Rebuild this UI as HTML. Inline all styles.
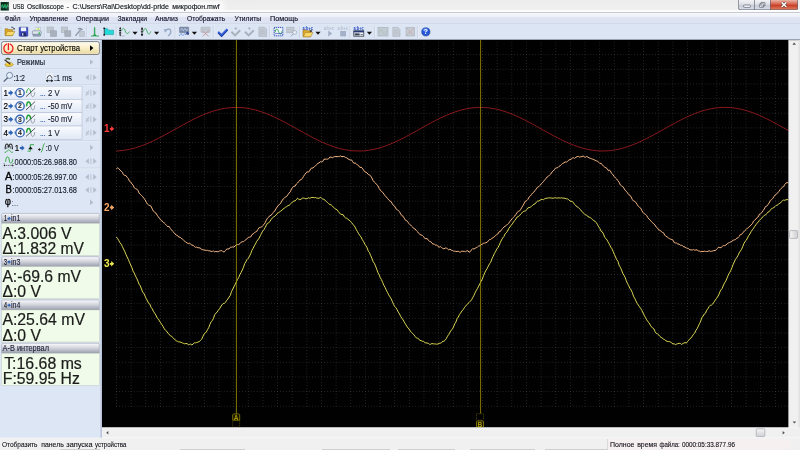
<!DOCTYPE html>
<html lang="ru"><head><meta charset="utf-8"><title>USB Oscilloscope</title>
<style>html,body{margin:0;padding:0;background:#dce6f4;overflow:hidden}svg{display:block;font-family:'Liberation Sans', sans-serif;opacity:0.999;will-change:transform}text{white-space:pre}</style>
</head><body>
<svg width="800" height="450" viewBox="0 0 800 450">
<defs>
<linearGradient id="gMenu" x1="0" y1="0" x2="0" y2="1"><stop offset="0" stop-color="#f7f8fc"/><stop offset="0.32" stop-color="#eef0f9"/><stop offset="0.42" stop-color="#e0e4f3"/><stop offset="1" stop-color="#dde2f2"/></linearGradient>
<linearGradient id="gTitle" x1="0" y1="0" x2="0" y2="1"><stop offset="0" stop-color="#ededed"/><stop offset="0.74" stop-color="#f0f0f0"/><stop offset="0.82" stop-color="#fbfbfb"/><stop offset="1" stop-color="#fdfdfd"/></linearGradient>
<linearGradient id="gBtn" x1="0" y1="0" x2="0" y2="1"><stop offset="0" stop-color="#fffdf0"/><stop offset="0.5" stop-color="#faf0c8"/><stop offset="1" stop-color="#e8d49c"/></linearGradient>
<linearGradient id="gHdr" x1="0" y1="0" x2="0" y2="1"><stop offset="0" stop-color="#fbfbfd"/><stop offset="0.45" stop-color="#d4d6de"/><stop offset="1" stop-color="#9a9eac"/></linearGradient>
<linearGradient id="gRow" x1="0" y1="0" x2="0" y2="1"><stop offset="0" stop-color="#fbfcff"/><stop offset="1" stop-color="#e2eaf7"/></linearGradient>
<linearGradient id="gWB" x1="0" y1="0" x2="0" y2="1"><stop offset="0" stop-color="#f2f3f6"/><stop offset="0.45" stop-color="#dfe1e8"/><stop offset="0.55" stop-color="#c8ccd6"/><stop offset="1" stop-color="#d8dce6"/></linearGradient>
<linearGradient id="gClose" x1="0" y1="0" x2="0" y2="1"><stop offset="0" stop-color="#eab4a6"/><stop offset="0.45" stop-color="#d6604a"/><stop offset="0.55" stop-color="#c63e26"/><stop offset="1" stop-color="#e07c5c"/></linearGradient>
<linearGradient id="gThumb" x1="0" y1="0" x2="0" y2="1"><stop offset="0" stop-color="#f6f6f6"/><stop offset="1" stop-color="#cfcfd4"/></linearGradient>
<linearGradient id="gThumbH" x1="0" y1="0" x2="1" y2="0"><stop offset="0" stop-color="#f6f6f6"/><stop offset="1" stop-color="#cfcfd4"/></linearGradient>
<filter id="glow" x="-10%" y="-80%" width="120%" height="260%"><feGaussianBlur stdDeviation="2"/></filter>
</defs>
<g id="titlebar">
<rect x="0.00" y="0.00" width="800.00" height="12.60" fill="url(#gTitle)" />
<rect x="0.60" y="2.00" width="8.40" height="8.60" fill="#123a2a" />
<rect x="1.20" y="2.60" width="7.20" height="7.40" fill="#0a2a1a" />
<path d="M1.4 7.5L2.6 4.5L3.8 8L5 4.2L6.2 8.2L7.4 4.6L8.3 7" fill="none" stroke="#30e060" stroke-width="0.7" />
<path d="M1.4 5L3 8.4L4.6 5L6 8.6L7.6 5.4" fill="none" stroke="#20a0a0" stroke-width="0.5" />
<rect x="10.00" y="1.50" width="214.00" height="9.50" fill="#ffffff" filter="url(#glow)" opacity="0.9"/>
<text y="9.23" font-size="7.90" fill="#10141c" stroke="#10141c" stroke-width="0.150"><tspan x="12.65" textLength="11.50" lengthAdjust="spacingAndGlyphs">USB</tspan><tspan> </tspan><tspan x="27.00" textLength="37.00" lengthAdjust="spacingAndGlyphs">Oscilloscope</tspan><tspan> </tspan><tspan x="66.40" textLength="2.60" lengthAdjust="spacingAndGlyphs">-</tspan><tspan> </tspan><tspan x="72.60" textLength="96.40" lengthAdjust="spacingAndGlyphs">C:\Users\Rai\Desktop\dd-pride</tspan><tspan> </tspan><tspan x="172.20" textLength="47.60" lengthAdjust="spacingAndGlyphs">микрофон.mwf</tspan></text>
<path d="M738.4 0H798V8.2Q798 10.1 796.2 10.1H740.2Q738.4 10.1 738.4 8.2Z" fill="#5a6070" />
<path d="M739 0H754.3V9.5H740.6Q739 9.5 739 7.9Z" fill="url(#gWB)" />
<rect x="754.90" y="0.00" width="15.10" height="9.50" fill="url(#gWB)" />
<path d="M770.6 0H797.4V7.9Q797.4 9.5 795.8 9.5H770.6Z" fill="url(#gClose)" />
<rect x="743.60" y="5.00" width="6.80" height="2.40" fill="#f4f6fa" stroke="#4a5060" stroke-width="0.6" rx="0.6" />
<rect x="759.40" y="3.80" width="4.20" height="3.60" fill="#f4f6fa" stroke="#4a5060" stroke-width="0.6" rx="0.5" />
<rect x="760.80" y="2.40" width="4.20" height="3.60" fill="none" stroke="#4a5060" stroke-width="0.6" rx="0.5" />
<path d="M781.6 2.4L786.4 7M786.4 2.4L781.6 7" fill="none" stroke="#5a2a24" stroke-width="2.6" />
<path d="M781.6 2.4L786.4 7M786.4 2.4L781.6 7" fill="none" stroke="#fff" stroke-width="1.5" />
<line x1="0.00" y1="12.75" x2="800.00" y2="12.75" stroke="#9ea2ae" stroke-width="0.7" />
</g>
<g id="menubar">
<rect x="0.00" y="13.00" width="800.00" height="11.20" fill="url(#gMenu)" />
<text x="4.50" y="21.46" font-size="8.00" fill="#0c0c20" stroke="#0c0c20" stroke-width="0.128" font-weight="normal" textLength="16.00" lengthAdjust="spacingAndGlyphs" >Файл</text>
<text x="29.50" y="21.46" font-size="8.00" fill="#0c0c20" stroke="#0c0c20" stroke-width="0.128" font-weight="normal" textLength="38.50" lengthAdjust="spacingAndGlyphs" >Управление</text>
<text x="76.00" y="21.46" font-size="8.00" fill="#0c0c20" stroke="#0c0c20" stroke-width="0.128" font-weight="normal" textLength="33.00" lengthAdjust="spacingAndGlyphs" >Операции</text>
<text x="117.50" y="21.46" font-size="8.00" fill="#0c0c20" stroke="#0c0c20" stroke-width="0.128" font-weight="normal" textLength="29.50" lengthAdjust="spacingAndGlyphs" >Закладки</text>
<text x="155.00" y="21.46" font-size="8.00" fill="#0c0c20" stroke="#0c0c20" stroke-width="0.128" font-weight="normal" textLength="23.00" lengthAdjust="spacingAndGlyphs" >Анализ</text>
<text x="187.00" y="21.46" font-size="8.00" fill="#0c0c20" stroke="#0c0c20" stroke-width="0.128" font-weight="normal" textLength="38.00" lengthAdjust="spacingAndGlyphs" >Отображать</text>
<text x="234.50" y="21.46" font-size="8.00" fill="#0c0c20" stroke="#0c0c20" stroke-width="0.128" font-weight="normal" textLength="26.50" lengthAdjust="spacingAndGlyphs" >Утилиты</text>
<text x="270.00" y="21.46" font-size="8.00" fill="#0c0c20" stroke="#0c0c20" stroke-width="0.128" font-weight="normal" textLength="28.00" lengthAdjust="spacingAndGlyphs" >Помощь</text>
</g>
<g id="toolbar">
<rect x="0.00" y="24.20" width="800.00" height="15.00" fill="#dbe5f4" />
<line x1="0.00" y1="23.85" x2="800.00" y2="23.85" stroke="#c2c8de" stroke-width="0.6" />
<line x1="0.00" y1="24.40" x2="800.00" y2="24.40" stroke="#e8eef8" stroke-width="0.5" />
<line x1="0.00" y1="39.50" x2="800.00" y2="39.50" stroke="#8a92a2" stroke-width="0.8" />
</g>
<line x1="1.00" y1="26.50" x2="1.00" y2="37.50" stroke="#b4bed0" stroke-width="0.8" stroke-dasharray="0.8 1"/>
<path d="M5.00 28.80H8.00L8.80 29.60H12.60V35.60H5.00Z" fill="#e0a828" stroke="#8a6a18" stroke-width="0.5" />
<path d="M5.30 35.60L7.40 31.40H15.00L12.60 35.60Z" fill="#fad868" stroke="#9a761c" stroke-width="0.5" />
<path d="M11.20 27.20Q13.40 26.80 14.00 28.60" fill="none" stroke="#202020" stroke-width="0.7" />
<path d="M13.00 28.40L15.00 28.20L14.20 30.00Z" fill="#202020" />
<rect x="19.20" y="27.20" width="8.60" height="9.00" fill="#3a48c4" stroke="#1c2478" stroke-width="0.5" rx="0.6" />
<rect x="20.80" y="27.40" width="5.40" height="3.80" fill="#f2f4ff" />
<rect x="21.40" y="32.60" width="4.40" height="3.60" fill="#20285a" />
<rect x="22.00" y="33.20" width="1.40" height="2.40" fill="#c8d0f0" />
<path d="M34.6 31L36 27.4H40.8L39.8 31Z" fill="#fbfdf4" stroke="#8a96a6" stroke-width="0.4" />
<path d="M36 29.6L38.8 27.8L39.6 29.8Z" fill="#a8e048" />
<rect x="32.40" y="30.80" width="8.80" height="3.80" fill="#dfe5ee" stroke="#5a6a84" stroke-width="0.5" rx="0.8" />
<rect x="33.00" y="34.20" width="7.60" height="2.00" fill="#9aa6ba" stroke="#5a6a84" stroke-width="0.4" rx="0.4" />
<rect x="38.40" y="32.40" width="1.80" height="1.40" fill="#28b838" />
<line x1="44.40" y1="26.00" x2="44.40" y2="38.00" stroke="#aeb8cc" stroke-width="0.6" />
<line x1="45.00" y1="26.00" x2="45.00" y2="38.00" stroke="#f6f8fc" stroke-width="0.6" />
<rect x="47.00" y="27.00" width="6.40" height="5.60" fill="#c3cad4" stroke="#a9b1bd" stroke-width="0.6" />
<path d="M48.00 31L49.60 28.6L51.00 31L52.60 28.6" fill="none" stroke="#b4beb8" stroke-width="0.5" />
<rect x="50.60" y="30.80" width="6.00" height="5.60" fill="#a9b1bd" stroke="#99a2b0" stroke-width="0.6" />
<rect x="61.20" y="27.00" width="6.40" height="5.60" fill="#c3cad4" stroke="#a9b1bd" stroke-width="0.6" />
<path d="M62.20 31L63.80 28.6L65.20 31L66.80 28.6" fill="none" stroke="#b4beb8" stroke-width="0.5" />
<rect x="64.80" y="30.80" width="6.00" height="5.60" fill="#a9b1bd" stroke="#99a2b0" stroke-width="0.6" />
<path d="M75.4 35.8L80.6 29.6" fill="none" stroke="#8a94a4" stroke-width="1.3" />
<path d="M77.6 28.4Q80.6 26.6 83 29.4L81.6 30.6Q80.4 28.8 78.4 29.6Z" fill="#8a94a4" />
<rect x="79.60" y="31.40" width="4.80" height="5.00" fill="#c3cad4" stroke="#a9b1bd" stroke-width="0.5" />
<line x1="87.00" y1="26.00" x2="87.00" y2="38.00" stroke="#aeb8cc" stroke-width="0.6" />
<line x1="87.60" y1="26.00" x2="87.60" y2="38.00" stroke="#f6f8fc" stroke-width="0.6" />
<path d="M91 36H94.4V27.4M94.8 27.4V36H99" fill="none" stroke="#22a046" stroke-width="0.8" />
<path d="M92.6 36L94.6 33.8L96.8 36Z" fill="#22a046" />
<path d="M104.6 28.4H107.2L108.6 30.2H113.6V34.6H104.6Z" fill="#22dada" stroke="#109898" stroke-width="0.5" />
<rect x="103.40" y="27.60" width="1.60" height="1.40" fill="#101010" />
<rect x="103.40" y="34.20" width="1.60" height="1.40" fill="#101010" />
<line x1="104.20" y1="28.60" x2="104.20" y2="35.00" stroke="#101010" stroke-width="0.6" />
<line x1="116.40" y1="26.00" x2="116.40" y2="38.00" stroke="#aeb8cc" stroke-width="0.6" />
<line x1="117.00" y1="26.00" x2="117.00" y2="38.00" stroke="#f6f8fc" stroke-width="0.6" />
<path d="M120.2 27.4V36" fill="none" stroke="#101010" stroke-width="0.7" stroke-dasharray="0.9 0.7"/>
<path d="M119.2 29L120.2 27.2L121.2 29ZM119.2 34.4L120.2 36.2L121.2 34.4Z" fill="#101010" />
<rect x="119.20" y="30.00" width="2.00" height="1.20" fill="#101010" />
<rect x="119.20" y="32.40" width="2.00" height="1.20" fill="#101010" />
<path d="M121.6 30.6C122.6 27.6 124.2 27.6 125.2 30.8S128 34.6 129.4 31.6" fill="none" stroke="#2aa040" stroke-width="0.8" />
<line x1="121.00" y1="36.00" x2="125.00" y2="36.00" stroke="#8a94a4" stroke-width="0.5" />
<path d="M132.40 31.8H137.60L135.00 34.8Z" fill="#101010" />
<path d="M142 27.6V35.8" fill="none" stroke="#101010" stroke-width="0.8" />
<path d="M140.8 29.4L142 27.2L143.2 29.4ZM140.8 34L142 36.2L143.2 34Z" fill="#101010" />
<line x1="140.80" y1="31.70" x2="143.20" y2="31.70" stroke="#101010" stroke-width="0.7" />
<path d="M143.4 31.4C144.4 27.6 146 27.6 147 31.2S149.6 35 150.8 31.4" fill="none" stroke="#2aa040" stroke-width="0.8" />
<path d="M154.00 31.8H159.20L156.60 34.8Z" fill="#101010" />
<path d="M165.4 31.2Q168.4 27.4 170.4 30Q171.8 32.8 168.2 36" fill="none" stroke="#9cabc9" stroke-width="1.5" />
<path d="M163.8 29L167.4 29.4L165 32.8Z" fill="#9cabc9" />
<line x1="175.20" y1="26.00" x2="175.20" y2="38.00" stroke="#aeb8cc" stroke-width="0.6" />
<line x1="175.80" y1="26.00" x2="175.80" y2="38.00" stroke="#f6f8fc" stroke-width="0.6" />
<rect x="179.60" y="27.20" width="9.00" height="5.40" fill="#7a8aa8" stroke="#55627a" stroke-width="0.5" rx="0.4" />
<path d="M180.2 30.6L181.8 28.4L183.4 30.8L185 28.4L186.6 30.8L188 28.6" fill="none" stroke="#d8ecff" stroke-width="0.6" />
<path d="M179.2 35.8L181 33.6L182.8 35.6L184.6 33.6L186 35" fill="none" stroke="#2a6ae0" stroke-width="0.8" stroke-dasharray="1.2 0.6"/>
<path d="M185.6 33.4L187.6 31.6L189.4 33.4Z" fill="#1a3ea8" />
<rect x="186.40" y="33.40" width="2.60" height="1.20" fill="#20285a" />
<path d="M191.80 31.8H197.00L194.40 34.8Z" fill="#101010" />
<rect x="201.00" y="27.20" width="9.00" height="5.20" fill="#c3cad4" stroke="#a9b1bd" stroke-width="0.6" rx="0.4" />
<path d="M202 30.4L203.6 28.6L205.2 30.6L206.8 28.6L208.6 30.6" fill="none" stroke="#b0bcc8" stroke-width="0.5" />
<path d="M202.4 30.8L208.8 36.4M208.8 30.8L202.4 36.4" fill="none" stroke="#c49a9a" stroke-width="0.9" />
<line x1="213.40" y1="26.00" x2="213.40" y2="38.00" stroke="#aeb8cc" stroke-width="0.6" />
<line x1="214.00" y1="26.00" x2="214.00" y2="38.00" stroke="#f6f8fc" stroke-width="0.6" />
<path d="M218.2 32.2L221.6 35.6L227.4 29.4" fill="none" stroke="#16309a" stroke-width="2.2" />
<path d="M218.4 31.8L221.6 34.8L227.2 29" fill="none" stroke="#3a6ae0" stroke-width="1.3" />
<path d="M231.40 31.8L235.00 35.4L240.20 30.2" fill="none" stroke="#a9b1bd" stroke-width="2.0" />
<path d="M235.80 27V30M234.40 28.4H237.20" fill="none" stroke="#a9b1bd" stroke-width="0.8" />
<path d="M245.00 31.8L248.60 35.4L253.80 30.2" fill="none" stroke="#a9b1bd" stroke-width="2.0" />
<path d="M249.40 27V30M248.00 28.4H250.80" fill="none" stroke="#a9b1bd" stroke-width="0.8" />
<path d="M258.8 27.2H264.6L266.6 29.2V36.4H258.8Z" fill="#c3cad4" stroke="#a9b1bd" stroke-width="0.6" />
<path d="M260 30H264M260 31.8H265M260 33.6H265" fill="none" stroke="#a9b1bd" stroke-width="0.5" />
<line x1="270.00" y1="26.00" x2="270.00" y2="38.00" stroke="#aeb8cc" stroke-width="0.6" />
<line x1="270.60" y1="26.00" x2="270.60" y2="38.00" stroke="#f6f8fc" stroke-width="0.6" />
<rect x="274.20" y="27.40" width="8.60" height="8.40" fill="#eef4ff" stroke="#2238b8" stroke-width="0.9" stroke-dasharray="1.2 0.7"/>
<path d="M275 32.4C276 28 277.6 28 278.6 31.6S281.2 35 282.2 30.8" fill="none" stroke="#2aa040" stroke-width="0.9" />
<line x1="275.00" y1="33.60" x2="282.00" y2="33.60" stroke="#2238b8" stroke-width="0.6" />
<rect x="286.80" y="27.20" width="7.20" height="5.60" fill="#c3cad4" stroke="#a9b1bd" stroke-width="0.6" />
<path d="M287.6 31L289.4 29L291 31L292.8 28.8" fill="none" stroke="#b0bcb8" stroke-width="0.5" />
<circle cx="294.8" cy="32.4" r="1.9" fill="#eef2f8" stroke="#9aa4b4" stroke-width="0.7"/>
<line x1="293.40" y1="33.80" x2="291.00" y2="36.40" stroke="#9aa4b4" stroke-width="1.0" />
<line x1="299.60" y1="26.00" x2="299.60" y2="38.00" stroke="#aeb8cc" stroke-width="0.6" />
<line x1="300.20" y1="26.00" x2="300.20" y2="38.00" stroke="#f6f8fc" stroke-width="0.6" />
<text x="302.60" y="29.6" font-size="4.6" font-weight="bold" fill="#2244c0" textLength="10.2" lengthAdjust="spacingAndGlyphs">a:b+c</text>
<path d="M303.00 30.00H306.00L306.80 30.80H310.60V36.80H303.00Z" fill="#e0a828" stroke="#8a6a18" stroke-width="0.5" />
<path d="M303.30 36.80L305.40 32.60H313.00L310.60 36.80Z" fill="#fad868" stroke="#9a761c" stroke-width="0.5" />
<path d="M309.4 29.8L311.6 31.4M311.6 31.4L311.8 29.6M311.6 31.4L309.8 31.6" fill="none" stroke="#202020" stroke-width="0.7" />
<path d="M315.40 31.8H320.60L318.00 34.8Z" fill="#101010" />
<text x="323.80" y="29.6" font-size="4.6" font-weight="bold" fill="#b4bccc" textLength="10.2" lengthAdjust="spacingAndGlyphs">a:b+c</text>
<path d="M328.2 30.6V36.4L332.2 33.5Z" fill="#a3b0c8" />
<text x="337.60" y="29.6" font-size="4.6" font-weight="bold" fill="#b4bccc" textLength="10.2" lengthAdjust="spacingAndGlyphs">a:b+c</text>
<rect x="340.20" y="31.00" width="5.80" height="5.40" fill="#a3b0c8" />
<line x1="350.20" y1="26.00" x2="350.20" y2="38.00" stroke="#aeb8cc" stroke-width="0.6" />
<line x1="350.80" y1="26.00" x2="350.80" y2="38.00" stroke="#f6f8fc" stroke-width="0.6" />
<text x="353.40" y="29.6" font-size="4.6" font-weight="bold" fill="#2244c0" textLength="10.2" lengthAdjust="spacingAndGlyphs">a:b+c</text>
<rect x="353.80" y="30.80" width="10.00" height="5.40" fill="#f4f6fa" stroke="#202838" stroke-width="0.7" />
<rect x="353.80" y="30.80" width="10.00" height="1.60" fill="#283a78" />
<rect x="354.60" y="33.40" width="5.00" height="2.00" fill="#3a4254" />
<line x1="360.40" y1="34.60" x2="363.00" y2="34.60" stroke="#202838" stroke-width="0.6" />
<path d="M366.80 31.8H372.00L369.40 34.8Z" fill="#101010" />
<line x1="374.80" y1="26.00" x2="374.80" y2="38.00" stroke="#aeb8cc" stroke-width="0.6" />
<line x1="375.40" y1="26.00" x2="375.40" y2="38.00" stroke="#f6f8fc" stroke-width="0.6" />
<rect x="378.00" y="27.40" width="10.00" height="8.60" fill="#c2cad2" stroke="#a4aebc" stroke-width="0.6" />
<path d="M379 33C380.2 29 381.6 29 382.8 32S385.4 35 386.8 30.6" fill="none" stroke="#a8b8ac" stroke-width="0.6" />
<path d="M392.8 27.4H398L400 29.4V36.4H392.8Z" fill="#c6ccd4" stroke="#a9b1bd" stroke-width="0.6" />
<path d="M394 30.4H397.4M394 32.2H398.8M394 34H398.8" fill="none" stroke="#b0b8c2" stroke-width="0.5" />
<rect x="406.00" y="27.40" width="8.60" height="8.60" fill="#c6ccd4" stroke="#a9b1bd" stroke-width="0.6" />
<path d="M406.6 28L414 35.6M414 28L406.6 35.6" fill="none" stroke="#c8a4a4" stroke-width="0.7" />
<line x1="417.80" y1="26.00" x2="417.80" y2="38.00" stroke="#aeb8cc" stroke-width="0.6" />
<line x1="418.40" y1="26.00" x2="418.40" y2="38.00" stroke="#f6f8fc" stroke-width="0.6" />
<circle cx="426.2" cy="32.2" r="4.3" fill="#c8ccd4"/>
<circle cx="425.8" cy="31.8" r="4.1" fill="#2456d8" stroke="#16389c" stroke-width="0.5"/>
<ellipse cx="425.4" cy="30" rx="2.8" ry="1.8" fill="#6a9af4" opacity="0.7"/>
<text x="425.8" y="34.3" font-size="6.6" font-weight="bold" fill="#fff" text-anchor="middle">?</text>
<g id="plot">
<rect x="101.90" y="40.00" width="686.70" height="387.60" fill="#000" />
<line x1="116.50" y1="42.64" x2="116.50" y2="406.51" stroke="#6a6a6a" stroke-width="0.5856515373352855" stroke-dasharray="0.5857 2.3440"/>
<line x1="131.14" y1="42.64" x2="131.14" y2="406.51" stroke="#6a6a6a" stroke-width="0.5856515373352855" stroke-dasharray="0.5857 2.3440"/>
<line x1="145.78" y1="42.64" x2="145.78" y2="406.51" stroke="#6a6a6a" stroke-width="0.5856515373352855" stroke-dasharray="0.5857 2.3440"/>
<line x1="160.42" y1="42.64" x2="160.42" y2="406.51" stroke="#6a6a6a" stroke-width="0.5856515373352855" stroke-dasharray="0.5857 2.3440"/>
<line x1="175.07" y1="42.64" x2="175.07" y2="406.51" stroke="#6a6a6a" stroke-width="0.5856515373352855" stroke-dasharray="0.5857 2.3440"/>
<line x1="189.71" y1="42.64" x2="189.71" y2="406.51" stroke="#6a6a6a" stroke-width="0.5856515373352855" stroke-dasharray="0.5857 2.3440"/>
<line x1="204.35" y1="42.64" x2="204.35" y2="406.51" stroke="#6a6a6a" stroke-width="0.5856515373352855" stroke-dasharray="0.5857 2.3440"/>
<line x1="218.99" y1="42.64" x2="218.99" y2="406.51" stroke="#6a6a6a" stroke-width="0.5856515373352855" stroke-dasharray="0.5857 2.3440"/>
<line x1="233.63" y1="42.64" x2="233.63" y2="406.51" stroke="#6a6a6a" stroke-width="0.5856515373352855" stroke-dasharray="0.5857 2.3440"/>
<line x1="248.27" y1="42.64" x2="248.27" y2="406.51" stroke="#6a6a6a" stroke-width="0.5856515373352855" stroke-dasharray="0.5857 2.3440"/>
<line x1="262.91" y1="42.64" x2="262.91" y2="406.51" stroke="#6a6a6a" stroke-width="0.5856515373352855" stroke-dasharray="0.5857 2.3440"/>
<line x1="277.55" y1="42.64" x2="277.55" y2="406.51" stroke="#6a6a6a" stroke-width="0.5856515373352855" stroke-dasharray="0.5857 2.3440"/>
<line x1="292.20" y1="42.64" x2="292.20" y2="406.51" stroke="#6a6a6a" stroke-width="0.5856515373352855" stroke-dasharray="0.5857 2.3440"/>
<line x1="306.84" y1="42.64" x2="306.84" y2="406.51" stroke="#6a6a6a" stroke-width="0.5856515373352855" stroke-dasharray="0.5857 2.3440"/>
<line x1="321.48" y1="42.64" x2="321.48" y2="406.51" stroke="#6a6a6a" stroke-width="0.5856515373352855" stroke-dasharray="0.5857 2.3440"/>
<line x1="336.12" y1="42.64" x2="336.12" y2="406.51" stroke="#6a6a6a" stroke-width="0.5856515373352855" stroke-dasharray="0.5857 2.3440"/>
<line x1="350.76" y1="42.64" x2="350.76" y2="406.51" stroke="#6a6a6a" stroke-width="0.5856515373352855" stroke-dasharray="0.5857 2.3440"/>
<line x1="365.40" y1="42.64" x2="365.40" y2="406.51" stroke="#6a6a6a" stroke-width="0.5856515373352855" stroke-dasharray="0.5857 2.3440"/>
<line x1="380.04" y1="42.64" x2="380.04" y2="406.51" stroke="#6a6a6a" stroke-width="0.5856515373352855" stroke-dasharray="0.5857 2.3440"/>
<line x1="394.68" y1="42.64" x2="394.68" y2="406.51" stroke="#6a6a6a" stroke-width="0.5856515373352855" stroke-dasharray="0.5857 2.3440"/>
<line x1="409.33" y1="42.64" x2="409.33" y2="406.51" stroke="#6a6a6a" stroke-width="0.5856515373352855" stroke-dasharray="0.5857 2.3440"/>
<line x1="423.97" y1="42.64" x2="423.97" y2="406.51" stroke="#6a6a6a" stroke-width="0.5856515373352855" stroke-dasharray="0.5857 2.3440"/>
<line x1="438.61" y1="42.64" x2="438.61" y2="406.51" stroke="#6a6a6a" stroke-width="0.5856515373352855" stroke-dasharray="0.5857 2.3440"/>
<line x1="453.25" y1="42.64" x2="453.25" y2="406.51" stroke="#6a6a6a" stroke-width="0.5856515373352855" stroke-dasharray="0.5857 2.3440"/>
<line x1="467.89" y1="42.64" x2="467.89" y2="406.51" stroke="#6a6a6a" stroke-width="0.5856515373352855" stroke-dasharray="0.5857 2.3440"/>
<line x1="482.53" y1="42.64" x2="482.53" y2="406.51" stroke="#6a6a6a" stroke-width="0.5856515373352855" stroke-dasharray="0.5857 2.3440"/>
<line x1="497.17" y1="42.64" x2="497.17" y2="406.51" stroke="#6a6a6a" stroke-width="0.5856515373352855" stroke-dasharray="0.5857 2.3440"/>
<line x1="511.81" y1="42.64" x2="511.81" y2="406.51" stroke="#6a6a6a" stroke-width="0.5856515373352855" stroke-dasharray="0.5857 2.3440"/>
<line x1="526.46" y1="42.64" x2="526.46" y2="406.51" stroke="#6a6a6a" stroke-width="0.5856515373352855" stroke-dasharray="0.5857 2.3440"/>
<line x1="541.10" y1="42.64" x2="541.10" y2="406.51" stroke="#6a6a6a" stroke-width="0.5856515373352855" stroke-dasharray="0.5857 2.3440"/>
<line x1="555.74" y1="42.64" x2="555.74" y2="406.51" stroke="#6a6a6a" stroke-width="0.5856515373352855" stroke-dasharray="0.5857 2.3440"/>
<line x1="570.38" y1="42.64" x2="570.38" y2="406.51" stroke="#6a6a6a" stroke-width="0.5856515373352855" stroke-dasharray="0.5857 2.3440"/>
<line x1="585.02" y1="42.64" x2="585.02" y2="406.51" stroke="#6a6a6a" stroke-width="0.5856515373352855" stroke-dasharray="0.5857 2.3440"/>
<line x1="599.66" y1="42.64" x2="599.66" y2="406.51" stroke="#6a6a6a" stroke-width="0.5856515373352855" stroke-dasharray="0.5857 2.3440"/>
<line x1="614.30" y1="42.64" x2="614.30" y2="406.51" stroke="#6a6a6a" stroke-width="0.5856515373352855" stroke-dasharray="0.5857 2.3440"/>
<line x1="628.95" y1="42.64" x2="628.95" y2="406.51" stroke="#6a6a6a" stroke-width="0.5856515373352855" stroke-dasharray="0.5857 2.3440"/>
<line x1="643.59" y1="42.64" x2="643.59" y2="406.51" stroke="#6a6a6a" stroke-width="0.5856515373352855" stroke-dasharray="0.5857 2.3440"/>
<line x1="658.23" y1="42.64" x2="658.23" y2="406.51" stroke="#6a6a6a" stroke-width="0.5856515373352855" stroke-dasharray="0.5857 2.3440"/>
<line x1="672.87" y1="42.64" x2="672.87" y2="406.51" stroke="#6a6a6a" stroke-width="0.5856515373352855" stroke-dasharray="0.5857 2.3440"/>
<line x1="687.51" y1="42.64" x2="687.51" y2="406.51" stroke="#6a6a6a" stroke-width="0.5856515373352855" stroke-dasharray="0.5857 2.3440"/>
<line x1="702.15" y1="42.64" x2="702.15" y2="406.51" stroke="#6a6a6a" stroke-width="0.5856515373352855" stroke-dasharray="0.5857 2.3440"/>
<line x1="716.79" y1="42.64" x2="716.79" y2="406.51" stroke="#6a6a6a" stroke-width="0.5856515373352855" stroke-dasharray="0.5857 2.3440"/>
<line x1="731.43" y1="42.64" x2="731.43" y2="406.51" stroke="#6a6a6a" stroke-width="0.5856515373352855" stroke-dasharray="0.5857 2.3440"/>
<line x1="746.08" y1="42.64" x2="746.08" y2="406.51" stroke="#6a6a6a" stroke-width="0.5856515373352855" stroke-dasharray="0.5857 2.3440"/>
<line x1="760.72" y1="42.64" x2="760.72" y2="406.51" stroke="#6a6a6a" stroke-width="0.5856515373352855" stroke-dasharray="0.5857 2.3440"/>
<line x1="775.36" y1="42.64" x2="775.36" y2="406.51" stroke="#6a6a6a" stroke-width="0.5856515373352855" stroke-dasharray="0.5857 2.3440"/>
<line x1="116.21" y1="54.65" x2="788.60" y2="54.65" stroke="#6a6a6a" stroke-width="0.5856515373352855" stroke-dasharray="0.5857 2.3426"/>
<line x1="116.21" y1="69.30" x2="788.60" y2="69.30" stroke="#6a6a6a" stroke-width="0.5856515373352855" stroke-dasharray="0.5857 2.3426"/>
<line x1="116.21" y1="83.95" x2="788.60" y2="83.95" stroke="#6a6a6a" stroke-width="0.5856515373352855" stroke-dasharray="0.5857 2.3426"/>
<line x1="116.21" y1="98.60" x2="788.60" y2="98.60" stroke="#6a6a6a" stroke-width="0.5856515373352855" stroke-dasharray="0.5857 2.3426"/>
<line x1="116.21" y1="113.24" x2="788.60" y2="113.24" stroke="#6a6a6a" stroke-width="0.5856515373352855" stroke-dasharray="0.5857 2.3426"/>
<line x1="116.21" y1="127.89" x2="788.60" y2="127.89" stroke="#6a6a6a" stroke-width="0.5856515373352855" stroke-dasharray="0.5857 2.3426"/>
<line x1="116.21" y1="142.54" x2="788.60" y2="142.54" stroke="#6a6a6a" stroke-width="0.5856515373352855" stroke-dasharray="0.5857 2.3426"/>
<line x1="116.21" y1="157.19" x2="788.60" y2="157.19" stroke="#6a6a6a" stroke-width="0.5856515373352855" stroke-dasharray="0.5857 2.3426"/>
<line x1="116.21" y1="171.84" x2="788.60" y2="171.84" stroke="#6a6a6a" stroke-width="0.5856515373352855" stroke-dasharray="0.5857 2.3426"/>
<line x1="116.21" y1="186.49" x2="788.60" y2="186.49" stroke="#6a6a6a" stroke-width="0.5856515373352855" stroke-dasharray="0.5857 2.3426"/>
<line x1="116.21" y1="201.13" x2="788.60" y2="201.13" stroke="#6a6a6a" stroke-width="0.5856515373352855" stroke-dasharray="0.5857 2.3426"/>
<line x1="116.21" y1="215.78" x2="788.60" y2="215.78" stroke="#6a6a6a" stroke-width="0.5856515373352855" stroke-dasharray="0.5857 2.3426"/>
<line x1="116.21" y1="230.43" x2="788.60" y2="230.43" stroke="#6a6a6a" stroke-width="0.5856515373352855" stroke-dasharray="0.5857 2.3426"/>
<line x1="116.21" y1="245.08" x2="788.60" y2="245.08" stroke="#6a6a6a" stroke-width="0.5856515373352855" stroke-dasharray="0.5857 2.3426"/>
<line x1="116.21" y1="259.73" x2="788.60" y2="259.73" stroke="#6a6a6a" stroke-width="0.5856515373352855" stroke-dasharray="0.5857 2.3426"/>
<line x1="116.21" y1="274.38" x2="788.60" y2="274.38" stroke="#6a6a6a" stroke-width="0.5856515373352855" stroke-dasharray="0.5857 2.3426"/>
<line x1="116.21" y1="289.02" x2="788.60" y2="289.02" stroke="#6a6a6a" stroke-width="0.5856515373352855" stroke-dasharray="0.5857 2.3426"/>
<line x1="116.21" y1="303.67" x2="788.60" y2="303.67" stroke="#6a6a6a" stroke-width="0.5856515373352855" stroke-dasharray="0.5857 2.3426"/>
<line x1="116.21" y1="318.32" x2="788.60" y2="318.32" stroke="#6a6a6a" stroke-width="0.5856515373352855" stroke-dasharray="0.5857 2.3426"/>
<line x1="116.21" y1="332.97" x2="788.60" y2="332.97" stroke="#6a6a6a" stroke-width="0.5856515373352855" stroke-dasharray="0.5857 2.3426"/>
<line x1="116.21" y1="347.62" x2="788.60" y2="347.62" stroke="#6a6a6a" stroke-width="0.5856515373352855" stroke-dasharray="0.5857 2.3426"/>
<line x1="116.21" y1="362.27" x2="788.60" y2="362.27" stroke="#6a6a6a" stroke-width="0.5856515373352855" stroke-dasharray="0.5857 2.3426"/>
<line x1="116.21" y1="376.92" x2="788.60" y2="376.92" stroke="#6a6a6a" stroke-width="0.5856515373352855" stroke-dasharray="0.5857 2.3426"/>
<line x1="116.21" y1="391.56" x2="788.60" y2="391.56" stroke="#6a6a6a" stroke-width="0.5856515373352855" stroke-dasharray="0.5857 2.3426"/>
<line x1="116.21" y1="406.21" x2="788.60" y2="406.21" stroke="#6a6a6a" stroke-width="0.5856515373352855" stroke-dasharray="0.5857 2.3426"/>
<path d="M116.3 150.97L118.7 150.85L121.1 150.65L123.5 150.37L125.9 150.01L128.3 149.57L130.7 149.05L133.1 148.46L135.5 147.80L137.9 147.06L140.3 146.25L142.7 145.38L145.1 144.45L147.5 143.46L149.9 142.42L152.3 141.32L154.7 140.18L157.1 139.00L159.5 137.78L161.9 136.53L164.3 135.25L166.7 133.94L169.1 132.62L171.5 131.29L173.9 129.94L176.3 128.60L178.7 127.25L181.1 125.92L183.5 124.60L185.9 123.29L188.3 122.01L190.7 120.75L193.1 119.53L195.5 118.34L197.9 117.20L200.3 116.10L202.7 115.05L205.1 114.05L207.5 113.11L209.9 112.24L212.3 111.42L214.7 110.68L217.1 110.00L219.5 109.40L221.9 108.88L224.3 108.43L226.7 108.06L229.1 107.77L231.5 107.57L233.9 107.44L236.3 107.40L238.7 107.44L241.1 107.57L243.5 107.77L245.9 108.06L248.3 108.43L250.7 108.88L253.1 109.40L255.5 110.00L257.9 110.68L260.3 111.42L262.7 112.24L265.1 113.11L267.5 114.05L269.9 115.05L272.3 116.10L274.7 117.20L277.1 118.34L279.5 119.53L281.9 120.75L284.3 122.01L286.7 123.29L289.1 124.60L291.5 125.92L293.9 127.25L296.3 128.60L298.7 129.94L301.1 131.29L303.5 132.62L305.9 133.94L308.3 135.25L310.7 136.53L313.1 137.78L315.5 139.00L317.9 140.18L320.3 141.32L322.7 142.42L325.1 143.46L327.5 144.45L329.9 145.38L332.3 146.25L334.7 147.06L337.1 147.80L339.5 148.46L341.9 149.05L344.3 149.57L346.7 150.01L349.1 150.37L351.5 150.65L353.9 150.85L356.3 150.97L358.7 151.00L361.1 150.95L363.5 150.82L365.9 150.60L368.3 150.30L370.7 149.93L373.1 149.47L375.5 148.94L377.9 148.33L380.3 147.65L382.7 146.90L385.1 146.08L387.5 145.19L389.9 144.25L392.3 143.25L394.7 142.19L397.1 141.09L399.5 139.94L401.9 138.75L404.3 137.52L406.7 136.26L409.1 134.98L411.5 133.67L413.9 132.34L416.3 131.01L418.7 129.66L421.1 128.32L423.5 126.98L425.9 125.64L428.3 124.32L430.7 123.02L433.1 121.74L435.5 120.49L437.9 119.28L440.3 118.10L442.7 116.96L445.1 115.87L447.5 114.83L449.9 113.85L452.3 112.92L454.7 112.06L457.1 111.26L459.5 110.53L461.9 109.87L464.3 109.29L466.7 108.78L469.1 108.35L471.5 107.99L473.9 107.72L476.3 107.53L478.7 107.43L481.1 107.40L483.5 107.46L485.9 107.60L488.3 107.83L490.7 108.13L493.1 108.52L495.5 108.98L497.9 109.52L500.3 110.14L502.7 110.83L505.1 111.59L507.5 112.41L509.9 113.30L512.3 114.25L514.7 115.26L517.1 116.32L519.5 117.43L521.9 118.58L524.3 119.78L526.7 121.01L529.1 122.27L531.5 123.56L533.9 124.87L536.3 126.20L538.7 127.53L541.1 128.88L543.5 130.22L545.9 131.56L548.3 132.90L550.7 134.21L553.1 135.51L555.5 136.79L557.9 138.04L560.3 139.25L562.7 140.42L565.1 141.55L567.5 142.64L569.9 143.67L572.3 144.65L574.7 145.57L577.1 146.43L579.5 147.22L581.9 147.94L584.3 148.59L586.7 149.17L589.1 149.67L591.5 150.09L593.9 150.44L596.3 150.70L598.7 150.88L601.1 150.98L603.5 151.00L605.9 150.93L608.3 150.78L610.7 150.55L613.1 150.23L615.5 149.84L617.9 149.37L620.3 148.82L622.7 148.19L625.1 147.50L627.5 146.73L629.9 145.90L632.3 145.00L634.7 144.04L637.1 143.03L639.5 141.97L641.9 140.85L644.3 139.69L646.7 138.49L649.1 137.26L651.5 136.00L653.9 134.70L656.3 133.39L658.7 132.07L661.1 130.73L663.5 129.38L665.9 128.04L668.3 126.70L670.7 125.37L673.1 124.05L675.5 122.75L677.9 121.48L680.3 120.24L682.7 119.03L685.1 117.86L687.5 116.73L689.9 115.65L692.3 114.62L694.7 113.65L697.1 112.74L699.5 111.89L701.9 111.10L704.3 110.39L706.7 109.74L709.1 109.18L711.5 108.68L713.9 108.27L716.3 107.93L718.7 107.68L721.1 107.50L723.5 107.41L725.9 107.41L728.3 107.48L730.7 107.64L733.1 107.88L735.5 108.21L737.9 108.61L740.3 109.09L742.7 109.64L745.1 110.28L747.5 110.98L749.9 111.75L752.3 112.59L754.7 113.50L757.1 114.46L759.5 115.48L761.9 116.55L764.3 117.67L766.7 118.83L769.1 120.03L771.5 121.27L773.9 122.54L776.3 123.83L778.7 125.14L781.1 126.47L783.5 127.81L785.9 129.16L788.3 130.50" fill="none" stroke="#b82226" stroke-width="0.75" stroke-linejoin="round" opacity="1"/>
<path d="M116.3 168.86L117.5 167.93L118.7 168.49L119.9 170.02L121.1 171.09L122.3 172.26L123.5 174.72L124.7 175.34L125.9 175.54L127.1 177.24L128.3 178.54L129.5 181.31L130.7 181.96L131.9 183.90L133.1 185.18L134.3 187.84L135.5 188.68L136.7 189.02L137.9 190.37L139.1 193.15L140.3 194.28L141.5 195.61L142.7 196.61L143.9 198.50L145.1 199.62L146.3 202.29L147.5 204.17L148.7 205.14L149.9 205.49L151.1 206.26L152.3 209.15L153.5 211.32L154.7 212.27L155.9 213.10L157.1 215.16L158.3 216.75L159.5 218.40L160.7 219.96L161.9 220.92L163.1 221.84L164.3 223.11L165.5 224.25L166.7 225.59L167.9 226.73L169.1 226.42L170.3 228.43L171.5 229.92L172.7 231.36L173.9 232.50L175.1 233.96L176.3 235.19L177.5 235.36L178.7 237.07L179.9 237.04L181.1 238.33L182.3 239.03L183.5 240.08L184.7 241.08L185.9 242.33L187.1 242.87L188.3 243.60L189.5 243.29L190.7 244.10L191.9 245.17L193.1 245.24L194.3 246.43L195.5 247.34L196.7 247.10L197.9 247.75L199.1 247.86L200.3 247.94L201.5 249.49L202.7 249.72L203.9 249.91L205.1 250.23L206.3 250.35L207.5 250.37L208.7 250.81L209.9 250.83L211.1 251.40L212.3 251.41L213.5 251.00L214.7 251.89L215.9 251.46L217.1 251.71L218.3 251.68L219.5 251.01L220.7 250.81L221.9 250.57L223.1 251.77L224.3 251.93L225.5 250.60L226.7 249.08L227.9 248.90L229.1 248.91L230.3 247.39L231.5 247.17L232.7 246.96L233.9 247.10L235.1 245.93L236.3 244.89L237.5 244.60L238.7 244.48L239.9 243.68L241.1 242.19L242.3 241.76L243.5 241.78L244.7 240.58L245.9 239.68L247.1 238.58L248.3 237.50L249.5 237.16L250.7 236.93L251.9 234.66L253.1 233.92L254.3 233.14L255.5 231.82L256.7 231.50L257.9 229.36L259.1 227.72L260.3 227.35L261.5 227.12L262.7 225.69L263.9 224.62L265.1 222.83L266.3 220.24L267.5 218.12L268.7 217.22L269.9 215.57L271.1 215.35L272.3 213.65L273.5 212.20L274.7 210.99L275.9 208.92L277.1 207.04L278.3 205.32L279.5 204.51L280.7 203.05L281.9 200.96L283.1 199.05L284.3 198.22L285.5 196.82L286.7 196.46L287.9 194.65L289.1 193.04L290.3 191.75L291.5 188.91L292.7 187.27L293.9 186.34L295.1 186.13L296.3 184.08L297.5 183.03L298.7 181.50L299.9 180.12L301.1 179.56L302.3 178.55L303.5 176.44L304.7 174.59L305.9 172.97L307.1 171.91L308.3 171.98L309.5 171.22L310.7 168.71L311.9 167.98L313.1 168.05L314.3 166.64L315.5 165.90L316.7 164.63L317.9 163.21L319.1 163.01L320.3 161.67L321.5 161.94L322.7 161.62L323.9 159.31L325.1 159.11L326.3 159.12L327.5 159.20L328.7 158.68L329.9 157.00L331.1 157.10L332.3 157.73L333.5 157.03L334.7 156.63L335.9 156.44L337.1 156.60L338.3 156.62L339.5 156.37L340.7 155.95L341.9 156.80L343.1 156.43L344.3 156.66L345.5 157.44L346.7 157.83L347.9 158.80L349.1 159.51L350.3 160.06L351.5 159.85L352.7 161.71L353.9 163.33L355.1 162.89L356.3 163.78L357.5 165.06L358.7 165.67L359.9 167.46L361.1 167.28L362.3 168.10L363.5 170.07L364.7 171.69L365.9 172.23L367.1 173.01L368.3 174.56L369.5 174.84L370.7 176.14L371.9 177.98L373.1 180.59L374.3 182.01L375.5 183.05L376.7 184.65L377.9 185.65L379.1 188.33L380.3 190.11L381.5 191.47L382.7 192.32L383.9 194.05L385.1 195.70L386.3 197.00L387.5 198.37L388.7 199.87L389.9 201.04L391.1 201.62L392.3 203.80L393.5 205.58L394.7 206.22L395.9 208.71L397.1 209.70L398.3 210.57L399.5 211.71L400.7 213.94L401.9 215.64L403.1 216.33L404.3 218.22L405.5 220.31L406.7 220.58L407.9 222.42L409.1 223.51L410.3 224.83L411.5 226.05L412.7 227.13L413.9 228.65L415.1 229.03L416.3 230.46L417.5 231.65L418.7 233.32L419.9 234.35L421.1 235.01L422.3 235.40L423.5 236.60L424.7 238.33L425.9 238.80L427.1 238.44L428.3 240.29L429.5 241.35L430.7 241.52L431.9 243.19L433.1 244.03L434.3 244.23L435.5 245.07L436.7 244.93L437.9 246.45L439.1 247.24L440.3 246.51L441.5 247.51L442.7 248.36L443.9 248.88L445.1 248.02L446.3 248.09L447.5 248.77L448.7 249.85L449.9 249.11L451.1 250.05L452.3 250.44L453.5 251.08L454.7 251.21L455.9 251.30L457.1 251.67L458.3 250.95L459.5 252.24L460.7 251.91L461.9 251.04L463.1 251.36L464.3 251.29L465.5 251.62L466.7 250.94L467.9 250.70L469.1 252.27L470.3 251.58L471.5 249.80L472.7 248.61L473.9 249.10L475.1 248.29L476.3 247.68L477.5 247.02L478.7 245.91L479.9 246.01L481.1 244.67L482.3 244.08L483.5 243.28L484.7 243.11L485.9 242.67L487.1 242.32L488.3 240.92L489.5 239.52L490.7 239.41L491.9 238.42L493.1 237.55L494.3 236.90L495.5 235.36L496.7 234.71L497.9 233.94L499.1 231.72L500.3 231.60L501.5 229.78L502.7 228.34L503.9 227.05L505.1 226.33L506.3 225.23L507.5 224.51L508.7 223.41L509.9 221.45L511.1 220.00L512.3 218.44L513.5 217.25L514.7 216.09L515.9 214.41L517.1 212.39L518.3 211.42L519.5 211.03L520.7 209.39L521.9 207.25L523.1 205.37L524.3 203.14L525.5 201.01L526.7 200.61L527.9 199.40L529.1 197.07L530.3 196.11L531.5 194.47L532.7 192.96L533.9 192.11L535.1 190.34L536.3 188.97L537.5 187.11L538.7 186.75L539.9 185.47L541.1 184.03L542.3 182.93L543.5 181.52L544.7 179.76L545.9 178.79L547.1 177.05L548.3 176.12L549.5 175.28L550.7 174.11L551.9 172.12L553.1 171.12L554.3 169.84L555.5 168.13L556.7 167.88L557.9 167.54L559.1 166.25L560.3 165.75L561.5 164.56L562.7 163.29L563.9 162.93L565.1 161.94L566.3 162.09L567.5 161.53L568.7 160.07L569.9 159.53L571.1 159.24L572.3 158.12L573.5 157.75L574.7 158.37L575.9 157.22L577.1 156.76L578.3 156.28L579.5 157.10L580.7 156.82L581.9 156.52L583.1 156.01L584.3 156.83L585.5 157.17L586.7 156.51L587.9 157.04L589.1 157.92L590.3 158.30L591.5 158.81L592.7 159.17L593.9 159.80L595.1 160.17L596.3 160.80L597.5 161.04L598.7 162.37L599.9 163.57L601.1 163.21L602.3 164.82L603.5 166.19L604.7 167.20L605.9 167.82L607.1 168.54L608.3 170.60L609.5 170.00L610.7 171.83L611.9 173.65L613.1 174.85L614.3 176.62L615.5 177.99L616.7 179.05L617.9 180.71L619.1 182.23L620.3 184.91L621.5 185.83L622.7 186.53L623.9 188.17L625.1 190.33L626.3 191.25L627.5 192.86L628.7 194.58L629.9 195.22L631.1 196.93L632.3 199.47L633.5 200.98L634.7 201.41L635.9 202.35L637.1 204.41L638.3 206.27L639.5 207.36L640.7 208.11L641.9 210.77L643.1 212.56L644.3 213.84L645.5 214.29L646.7 215.56L647.9 217.75L649.1 219.15L650.3 220.19L651.5 221.75L652.7 222.79L653.9 224.23L655.1 225.10L656.3 227.17L657.5 228.10L658.7 229.87L659.9 230.27L661.1 231.32L662.3 232.42L663.5 232.71L664.7 235.07L665.9 236.40L667.1 236.77L668.3 237.87L669.5 238.70L670.7 239.22L671.9 239.48L673.1 240.26L674.3 242.71L675.5 242.96L676.7 243.06L677.9 244.23L679.1 243.94L680.3 245.22L681.5 245.32L682.7 245.82L683.9 246.97L685.1 246.88L686.3 248.10L687.5 248.36L688.7 248.78L689.9 249.86L691.1 249.96L692.3 249.98L693.5 249.60L694.7 250.20L695.9 250.01L697.1 249.77L698.3 251.06L699.5 251.06L700.7 251.84L701.9 251.28L703.1 251.59L704.3 251.20L705.5 251.44L706.7 251.55L707.9 251.43L709.1 250.69L710.3 251.36L711.5 251.28L712.7 251.03L713.9 250.57L715.1 250.54L716.3 249.71L717.5 248.40L718.7 247.09L719.9 247.79L721.1 247.53L722.3 246.45L723.5 245.55L724.7 245.69L725.9 245.04L727.1 243.90L728.3 243.06L729.5 242.53L730.7 241.85L731.9 241.32L733.1 240.29L734.3 239.87L735.5 239.68L736.7 238.17L737.9 237.83L739.1 236.55L740.3 234.61L741.5 234.50L742.7 232.72L743.9 231.87L745.1 230.36L746.3 229.33L747.5 228.10L748.7 227.26L749.9 226.24L751.1 224.91L752.3 223.66L753.5 221.19L754.7 220.18L755.9 219.15L757.1 217.54L758.3 216.79L759.5 214.04L760.7 213.72L761.9 212.55L763.1 210.63L764.3 208.97L765.5 206.52L766.7 206.18L767.9 204.70L769.1 202.98L770.3 200.55L771.5 199.60L772.7 198.54L773.9 196.67L775.1 195.00L776.3 194.38L777.5 192.93L778.7 191.70L779.9 189.88L781.1 188.52L782.3 187.33L783.5 186.74L784.7 184.54L785.9 183.15L787.1 182.56L788.3 182.95" fill="none" stroke="#f6b884" stroke-width="1.0" stroke-linejoin="round" opacity="1"/>
<path d="M116.3 237.01L117.5 238.43L118.7 240.36L119.9 242.62L121.1 244.08L122.3 246.37L123.5 249.01L124.7 251.38L125.9 254.25L127.1 256.97L128.3 259.36L129.5 262.37L130.7 265.01L131.9 267.72L133.1 271.17L134.3 273.13L135.5 276.19L136.7 278.21L137.9 281.05L139.1 284.20L140.3 285.91L141.5 288.95L142.7 292.35L143.9 293.31L145.1 296.16L146.3 298.78L147.5 300.97L148.7 303.41L149.9 304.18L151.1 307.41L152.3 308.98L153.5 311.40L154.7 313.24L155.9 315.11L157.1 317.82L158.3 318.89L159.5 321.08L160.7 322.80L161.9 324.72L163.1 326.47L164.3 328.72L165.5 330.32L166.7 331.22L167.9 333.01L169.1 334.55L170.3 335.61L171.5 336.15L172.7 337.58L173.9 338.74L175.1 339.75L176.3 340.80L177.5 341.25L178.7 341.89L179.9 341.96L181.1 342.25L182.3 342.94L183.5 343.40L184.7 343.81L185.9 343.56L187.1 343.57L188.3 344.72L189.5 344.41L190.7 344.07L191.9 345.01L193.1 343.98L194.3 342.83L195.5 342.90L196.7 342.49L197.9 342.12L199.1 341.67L200.3 340.59L201.5 339.53L202.7 336.93L203.9 334.29L205.1 333.34L206.3 331.92L207.5 329.67L208.7 327.66L209.9 324.45L211.1 321.76L212.3 320.61L213.5 318.24L214.7 314.70L215.9 313.14L217.1 312.21L218.3 310.27L219.5 308.77L220.7 306.94L221.9 304.92L223.1 303.61L224.3 303.37L225.5 302.38L226.7 300.35L227.9 299.00L229.1 297.02L230.3 295.38L231.5 291.56L232.7 289.10L233.9 286.88L235.1 284.56L236.3 281.96L237.5 279.47L238.7 277.46L239.9 274.68L241.1 272.43L242.3 269.98L243.5 267.21L244.7 263.62L245.9 261.74L247.1 259.48L248.3 258.28L249.5 256.12L250.7 253.72L251.9 250.36L253.1 248.35L254.3 245.88L255.5 243.93L256.7 241.25L257.9 239.98L259.1 238.11L260.3 235.75L261.5 233.28L262.7 231.14L263.9 229.76L265.1 227.65L266.3 225.15L267.5 223.18L268.7 222.63L269.9 221.58L271.1 219.55L272.3 217.98L273.5 217.06L274.7 216.39L275.9 215.16L277.1 213.57L278.3 212.72L279.5 212.19L280.7 210.89L281.9 210.38L283.1 208.91L284.3 208.21L285.5 207.21L286.7 206.64L287.9 205.67L289.1 205.31L290.3 204.15L291.5 203.10L292.7 201.87L293.9 201.04L295.1 200.92L296.3 199.71L297.5 198.21L298.7 199.12L299.9 199.80L301.1 199.07L302.3 198.26L303.5 198.03L304.7 198.34L305.9 198.79L307.1 198.54L308.3 197.77L309.5 198.21L310.7 197.85L311.9 197.40L313.1 197.46L314.3 197.74L315.5 197.52L316.7 198.09L317.9 198.22L319.1 198.26L320.3 197.33L321.5 198.10L322.7 199.08L323.9 199.29L325.1 200.26L326.3 201.45L327.5 202.52L328.7 203.68L329.9 204.57L331.1 204.80L332.3 205.97L333.5 207.19L334.7 208.50L335.9 209.26L337.1 209.72L338.3 211.56L339.5 212.83L340.7 214.32L341.9 214.51L343.1 214.62L344.3 216.82L345.5 217.92L346.7 218.21L347.9 219.23L349.1 220.21L350.3 221.16L351.5 222.50L352.7 224.09L353.9 225.38L355.1 227.07L356.3 229.68L357.5 231.68L358.7 233.77L359.9 235.60L361.1 237.04L362.3 239.69L363.5 241.42L364.7 244.00L365.9 245.73L367.1 247.74L368.3 251.18L369.5 252.65L370.7 255.59L371.9 258.30L373.1 261.62L374.3 263.25L375.5 265.93L376.7 269.15L377.9 272.53L379.1 274.80L380.3 277.72L381.5 279.74L382.7 282.50L383.9 285.41L385.1 287.47L386.3 290.20L387.5 292.48L388.7 294.86L389.9 296.84L391.1 298.68L392.3 301.38L393.5 304.31L394.7 306.51L395.9 307.73L397.1 309.65L398.3 312.10L399.5 314.00L400.7 316.38L401.9 318.27L403.1 319.89L404.3 322.15L405.5 324.18L406.7 326.07L407.9 327.92L409.1 329.02L410.3 331.06L411.5 332.39L412.7 333.68L413.9 334.73L415.1 336.43L416.3 337.91L417.5 338.26L418.7 338.84L419.9 340.49L421.1 340.56L422.3 341.31L423.5 341.19L424.7 342.67L425.9 342.93L427.1 343.00L428.3 343.32L429.5 344.30L430.7 344.20L431.9 343.59L433.1 343.79L434.3 343.93L435.5 344.00L436.7 344.15L437.9 344.07L439.1 343.27L440.3 343.19L441.5 342.79L442.7 341.16L443.9 341.31L445.1 340.26L446.3 338.62L447.5 336.18L448.7 334.57L449.9 332.29L451.1 330.29L452.3 329.26L453.5 326.98L454.7 323.85L455.9 322.13L457.1 318.64L458.3 317.03L459.5 314.42L460.7 312.93L461.9 310.96L463.1 309.72L464.3 307.80L465.5 306.22L466.7 304.92L467.9 303.51L469.1 302.53L470.3 301.25L471.5 299.92L472.7 297.69L473.9 295.47L475.1 292.76L476.3 290.47L477.5 288.44L478.7 286.10L479.9 283.60L481.1 281.29L482.3 279.12L483.5 275.81L484.7 272.89L485.9 270.36L487.1 268.66L488.3 266.17L489.5 263.88L490.7 262.33L491.9 258.87L493.1 256.42L494.3 253.65L495.5 251.73L496.7 249.11L497.9 247.71L499.1 245.26L500.3 242.57L501.5 239.97L502.7 237.99L503.9 236.47L505.1 233.90L506.3 232.76L507.5 231.13L508.7 228.52L509.9 226.95L511.1 225.34L512.3 223.93L513.5 222.02L514.7 220.46L515.9 218.97L517.1 217.04L518.3 216.51L519.5 215.59L520.7 214.06L521.9 212.99L523.1 211.64L524.3 211.12L525.5 211.07L526.7 209.48L527.9 207.88L529.1 207.59L530.3 207.19L531.5 206.37L532.7 205.16L533.9 204.25L535.1 203.86L536.3 202.14L537.5 201.15L538.7 200.99L539.9 200.45L541.1 199.45L542.3 199.47L543.5 199.65L544.7 198.72L545.9 198.27L547.1 198.18L548.3 197.91L549.5 197.91L550.7 197.88L551.9 198.15L553.1 198.28L554.3 197.89L555.5 197.76L556.7 198.10L557.9 197.95L559.1 197.90L560.3 198.02L561.5 197.85L562.7 198.09L563.9 198.20L565.1 198.28L566.3 198.87L567.5 198.80L568.7 199.66L569.9 200.96L571.1 201.34L572.3 201.40L573.5 202.85L574.7 204.56L575.9 205.85L577.1 206.72L578.3 207.43L579.5 208.79L580.7 209.83L581.9 211.47L583.1 212.83L584.3 213.90L585.5 214.74L586.7 215.12L587.9 216.73L589.1 217.02L590.3 217.68L591.5 218.43L592.7 219.81L593.9 220.73L595.1 221.40L596.3 222.51L597.5 224.69L598.7 226.79L599.9 228.65L601.1 231.23L602.3 231.92L603.5 234.05L604.7 237.32L605.9 238.51L607.1 240.12L608.3 242.30L609.5 244.53L610.7 247.04L611.9 248.66L613.1 251.36L614.3 254.28L615.5 256.96L616.7 259.73L617.9 261.21L619.1 265.27L620.3 267.24L621.5 269.87L622.7 273.17L623.9 275.16L625.1 277.44L626.3 280.79L627.5 283.45L628.7 285.67L629.9 288.23L631.1 289.95L632.3 292.53L633.5 296.16L634.7 298.25L635.9 300.88L637.1 303.28L638.3 305.05L639.5 306.77L640.7 308.50L641.9 310.47L643.1 313.03L644.3 315.38L645.5 317.70L646.7 319.85L647.9 321.67L649.1 322.85L650.3 325.12L651.5 326.84L652.7 328.17L653.9 328.86L655.1 331.75L656.3 333.44L657.5 333.77L658.7 334.98L659.9 336.47L661.1 337.50L662.3 337.89L663.5 339.36L664.7 339.65L665.9 340.77L667.1 341.27L668.3 341.58L669.5 341.59L670.7 341.97L671.9 343.32L673.1 343.85L674.3 343.87L675.5 344.63L676.7 344.10L677.9 343.62L679.1 343.31L680.3 343.39L681.5 344.43L682.7 343.65L683.9 343.07L685.1 342.45L686.3 343.23L687.5 341.48L688.7 340.26L689.9 338.67L691.1 337.90L692.3 336.26L693.5 334.22L694.7 333.19L695.9 330.34L697.1 328.73L698.3 326.24L699.5 323.62L700.7 321.07L701.9 317.66L703.1 316.04L704.3 313.98L705.5 313.20L706.7 310.19L707.9 308.76L709.1 306.59L710.3 305.26L711.5 305.10L712.7 304.00L713.9 302.16L715.1 300.33L716.3 298.66L717.5 297.00L718.7 295.02L719.9 291.88L721.1 289.70L722.3 288.20L723.5 285.00L724.7 282.65L725.9 280.82L727.1 277.89L728.3 275.05L729.5 272.76L730.7 270.67L731.9 267.80L733.1 264.61L734.3 261.96L735.5 259.34L736.7 257.73L737.9 255.65L739.1 252.97L740.3 251.10L741.5 249.43L742.7 246.67L743.9 243.55L745.1 241.35L746.3 240.26L747.5 237.84L748.7 235.57L749.9 233.97L751.1 231.68L752.3 229.90L753.5 228.34L754.7 226.45L755.9 224.76L757.1 223.26L758.3 221.93L759.5 220.30L760.7 219.04L761.9 218.03L763.1 216.57L764.3 215.33L765.5 215.04L766.7 213.62L767.9 212.14L769.1 211.76L770.3 210.23L771.5 208.61L772.7 208.20L773.9 207.46L775.1 206.53L776.3 205.27L777.5 205.25L778.7 203.70L779.9 203.29L781.1 202.20L782.3 201.09L783.5 199.88L784.7 200.32L785.9 199.87L787.1 199.40L788.3 200.00" fill="none" stroke="#e6e258" stroke-width="0.95" stroke-linejoin="round" opacity="1"/>
<line x1="236.4" y1="40" x2="236.4" y2="413.6" stroke="#a89800" stroke-width="0.8"/>
<line x1="480.6" y1="40" x2="480.6" y2="413.6" stroke="#a89800" stroke-width="0.8"/>
<path d="M233.60 413.90H238.80L239.70 414.80V420.20H232.70V414.80Z" fill="#141200" stroke="#a89800" stroke-width="0.7"/><text x="236.20" y="419.80" font-size="6.6" font-weight="bold" text-anchor="middle" fill="#a89800">A</text><rect x="232.70" y="420.80" width="7" height="6.4" fill="none" stroke="#6a6000" stroke-width="0.7" stroke-dasharray="1.2 1"/>
<path d="M477.40 420.90H482.60L483.50 421.80V427.20H476.50V421.80Z" fill="#141200" stroke="#a89800" stroke-width="0.7"/><text x="480.00" y="426.80" font-size="6.6" font-weight="bold" text-anchor="middle" fill="#a89800">B</text><rect x="476.50" y="413.80" width="7" height="6.4" fill="none" stroke="#6a6000" stroke-width="0.7" stroke-dasharray="1.2 1"/>
<text x="103.9" y="132.38" font-size="10" font-weight="bold" fill="#ff3a3a">1</text>
<path d="M109.9 127.90H111.2V126.00L114.2 128.80L111.2 131.60V129.70H109.9Z" fill="#ff3a3a"/>
<text x="103.9" y="211.08" font-size="10" font-weight="bold" fill="#f4a868">2</text>
<path d="M109.9 206.60H111.2V204.70L114.2 207.50L111.2 210.30V208.40H109.9Z" fill="#f4a868"/>
<text x="103.9" y="267.38" font-size="10" font-weight="bold" fill="#f0ec50">3</text>
<path d="M109.9 262.90H111.2V261.00L114.2 263.80L111.2 266.60V264.70H109.9Z" fill="#f0ec50"/>
</g>
<g id="scrollbars">
<rect x="788.60" y="40.00" width="11.40" height="387.60" fill="#f0f0f0" />
<line x1="788.60" y1="40.20" x2="800.00" y2="40.20" stroke="#a0a0a0" stroke-width="0.6" />
<path d="M792.40 44.80L796.00 44.80L794.20 42.60Z" fill="#505050" />
<path d="M792.60 421.40L796.20 421.40L794.40 423.60Z" fill="#505050" />
<rect x="101.90" y="427.60" width="698.10" height="10.00" fill="#f0f0f0" />
<line x1="101.90" y1="427.80" x2="800.00" y2="427.80" stroke="#ffffff" stroke-width="0.5" />
<path d="M108.40 431.00L106.20 432.80L108.40 434.60Z" fill="#505050" />
<path d="M782.60 431.00L784.80 432.80L782.60 434.60Z" fill="#505050" />
<rect x="756.20" y="428.80" width="8.60" height="7.80" fill="url(#gThumb)" stroke="#9a9aa0" stroke-width="0.6" rx="1" />
<rect x="789.60" y="230.60" width="8.00" height="7.80" fill="url(#gThumbH)" stroke="#9a9aa0" stroke-width="0.6" rx="1" />
<line x1="799.20" y1="40.00" x2="799.20" y2="427.60" stroke="#e2e2e2" stroke-width="1.6" />
</g>
<g id="statusbar">
<rect x="0.00" y="437.60" width="800.00" height="12.40" fill="#f0f0f0" />
<line x1="0.00" y1="437.80" x2="800.00" y2="437.80" stroke="#ffffff" stroke-width="0.6" />
<rect x="608.00" y="439.00" width="182.00" height="10.00" fill="#f6f0f0" />
<line x1="607.60" y1="439.00" x2="607.60" y2="449.00" stroke="#c8c8c8" stroke-width="0.6" />
<text y="447.43" font-size="7.90" fill="#0c0c14" stroke="#0c0c14" stroke-width="0.100"><tspan x="2.00" textLength="35.50" lengthAdjust="spacingAndGlyphs">Отобразить</tspan><tspan> </tspan><tspan x="41.25" textLength="22.50" lengthAdjust="spacingAndGlyphs">панель</tspan><tspan> </tspan><tspan x="66.25" textLength="26.25" lengthAdjust="spacingAndGlyphs">запуска</tspan><tspan> </tspan><tspan x="95.00" textLength="31.30" lengthAdjust="spacingAndGlyphs">устройства</tspan></text>
<text y="447.43" font-size="7.90" fill="#0c0c14" stroke="#0c0c14" stroke-width="0.100"><tspan x="610.00" textLength="24.40" lengthAdjust="spacingAndGlyphs">Полное</tspan><tspan> </tspan><tspan x="637.20" textLength="19.90" lengthAdjust="spacingAndGlyphs">время</tspan><tspan> </tspan><tspan x="659.50" textLength="20.30" lengthAdjust="spacingAndGlyphs">файла:</tspan><tspan> </tspan><tspan x="681.90" textLength="53.10" lengthAdjust="spacingAndGlyphs">0000:05:33.877.96</tspan></text>
<line x1="60.00" y1="449.70" x2="100.00" y2="449.70" stroke="#b4b4b4" stroke-width="0.7" />
<line x1="180.00" y1="449.70" x2="245.00" y2="449.70" stroke="#b4b4b4" stroke-width="0.7" />
<line x1="322.00" y1="449.70" x2="390.00" y2="449.70" stroke="#b4b4b4" stroke-width="0.7" />
<line x1="398.00" y1="449.70" x2="455.00" y2="449.70" stroke="#b4b4b4" stroke-width="0.7" />
<line x1="470.00" y1="449.70" x2="535.00" y2="449.70" stroke="#b4b4b4" stroke-width="0.7" />
<line x1="545.00" y1="449.70" x2="608.00" y2="449.70" stroke="#b4b4b4" stroke-width="0.7" />
</g>
<g id="sidepanel">
<rect x="0.00" y="39.90" width="100.60" height="397.70" fill="#dce6f4" />
<rect x="100.60" y="39.90" width="1.30" height="397.70" fill="#b4c0d6" />
<line x1="100.90" y1="39.90" x2="100.90" y2="437.60" stroke="#c4cede" stroke-width="0.6" />
<rect x="1.70" y="41.70" width="97.60" height="12.70" fill="url(#gBtn)" stroke="#3c3c3c" stroke-width="0.7" rx="1.8" />
<rect x="2.40" y="42.40" width="96.20" height="11.30" fill="none" stroke="#fffef6" stroke-width="0.5" rx="1.4" />
<path d="M6.6 44.2A4.6 4.6 0 1 0 10.2 44.2" fill="none" stroke="#ee1c1c" stroke-width="1.3" stroke-linecap="round"/>
<line x1="8.40" y1="43.60" x2="8.40" y2="49.60" stroke="#ee1c1c" stroke-width="1.3" stroke-linecap="round"/>
<text x="17.00" y="51.31" font-size="9.70" fill="#000" stroke="#000" stroke-width="0.126" font-weight="normal" textLength="63.00" lengthAdjust="spacingAndGlyphs" >Старт устройства</text>
<path d="M90.00 45.30L93.40 48.10L90.00 50.90Z" fill="#000" />
<path d="M4.8 65Q6 62.2 9 62Q12 62.2 13.4 64.6Q12 66.6 9 66.6Q5.6 66.6 4.8 65Z" fill="#f0c838" stroke="#8a6a18" stroke-width="0.5" />
<path d="M6 63.6Q9 62.6 12 63.8" fill="none" stroke="#fff0a0" stroke-width="0.6" />
<path d="M4.6 59.8L10.4 64.2" fill="none" stroke="#3a2c20" stroke-width="1.2" />
<path d="M5.6 58.6Q8 57 10.4 58.8L9.6 60Q7.8 58.8 6.2 59.8Z" fill="#4a5a20" />
<text x="17.00" y="65.21" font-size="9.70" fill="#141a28" stroke="#141a28" stroke-width="0.126" font-weight="normal" textLength="28.00" lengthAdjust="spacingAndGlyphs" >Режимы</text>
<path d="M90.00 59.20L93.40 62.00L90.00 64.80Z" fill="#b4bdcc" />
<line x1="1.00" y1="69.00" x2="100.00" y2="69.00" stroke="#b9c5d9" stroke-width="0.6" />
<line x1="1.00" y1="69.60" x2="100.00" y2="69.60" stroke="#f4f7fc" stroke-width="0.6" />
<circle cx="9.6" cy="75.4" r="3" fill="#e4f0fc" stroke="#6a7c98" stroke-width="0.9"/>
<line x1="7.60" y1="77.80" x2="3.80" y2="81.60" stroke="#56627a" stroke-width="1.3" />
<text x="13.40" y="80.71" font-size="9.70" fill="#141a28" stroke="#141a28" stroke-width="0.126" font-weight="normal" textLength="11.60" lengthAdjust="spacingAndGlyphs" >:1:2</text>
<rect x="45.60" y="72.60" width="8.00" height="6.20" fill="#eef2f8" stroke="#c2cad8" stroke-width="0.5" rx="0.4" stroke-dasharray="0.8 0.6"/>
<path d="M47.2 78.4C48.2 74.4 51 74.4 52 78.4" fill="none" stroke="#303640" stroke-width="0.9" />
<path d="M46.2 80.7H52.8" fill="none" stroke="#101418" stroke-width="0.8" />
<path d="M45.8 80.7L47.8 79.2V82.2ZM53.2 80.7L51.2 79.2V82.2Z" fill="#101418" />
<text x="54.00" y="80.71" font-size="9.70" fill="#141a28" stroke="#141a28" stroke-width="0.126" font-weight="normal" textLength="18.00" lengthAdjust="spacingAndGlyphs" >:1 ms</text>
<path d="M88.90 74.50L85.40 77.40L88.90 80.30Z" fill="#b4bdcc" />
<line x1="90.90" y1="74.40" x2="90.90" y2="80.40" stroke="#b4bdcc" stroke-width="0.9" />
<path d="M93.20 74.50L96.70 77.40L93.20 80.30Z" fill="#b4bdcc" />
<line x1="1.00" y1="85.00" x2="100.00" y2="85.00" stroke="#b9c5d9" stroke-width="0.6" />
<line x1="1.00" y1="85.60" x2="100.00" y2="85.60" stroke="#f4f7fc" stroke-width="0.6" />
<rect x="1.70" y="86.20" width="80.30" height="13.27" fill="url(#gRow)" stroke="#b4c0d6" stroke-width="0.6" />
<text x="3.60" y="95.89" font-size="9.20" fill="#000" stroke="#000" stroke-width="0.180" font-weight="normal" textLength="4.50" lengthAdjust="spacingAndGlyphs" >1</text>
<path d="M8.50 91.72H10.29V90.04L13.20 92.84L10.29 95.64V93.96H8.50Z" fill="#2c62b4" />
<circle cx="20" cy="92.84" r="4.2" fill="#f8fbff" stroke="#3a68b4" stroke-width="1.4"/>
<path d="M14.6 91.54L16.4 92.84L14.6 94.14Z" fill="#3a68b4" />
<text x="20.00" y="95.04" font-size="6.80" fill="#2a2a30" stroke="#2a2a30" stroke-width="0.088" font-weight="bold" text-anchor="middle">1</text>
<path d="M26.60 93.04C26.80 87.24 30.20 87.24 30.80 92.64" fill="none" stroke="#1fa032" stroke-width="0.9" />
<path d="M30.80 92.64C31.20 98.04 34.40 98.04 34.80 92.24" fill="none" stroke="#8e96a4" stroke-width="0.9" />
<line x1="26.00" y1="96.64" x2="35.20" y2="88.24" stroke="#30343c" stroke-width="0.8" />
<text x="40.00" y="95.84" font-size="9.70" fill="#1a4ca8" stroke="#1a4ca8" stroke-width="0.126" font-weight="normal" textLength="5.60" lengthAdjust="spacingAndGlyphs" >...</text>
<text x="48.00" y="95.84" font-size="9.70" fill="#141a28" stroke="#141a28" stroke-width="0.126" font-weight="normal" textLength="11.60" lengthAdjust="spacingAndGlyphs" >2 V</text>
<path d="M85.8 92.44H89.4M85.6 94.24H89.2M88.6 90.24L86.4 95.84" fill="none" stroke="#b4bdcc" stroke-width="0.8" />
<line x1="90.90" y1="89.84" x2="90.90" y2="95.84" stroke="#b4bdcc" stroke-width="0.9" />
<path d="M93.20 89.94L96.70 92.84L93.20 95.74Z" fill="#b4bdcc" />
<rect x="1.70" y="99.47" width="80.30" height="13.27" fill="url(#gRow)" stroke="#b4c0d6" stroke-width="0.6" />
<text x="3.60" y="109.16" font-size="9.20" fill="#000" stroke="#000" stroke-width="0.180" font-weight="normal" textLength="4.50" lengthAdjust="spacingAndGlyphs" >2</text>
<path d="M8.50 104.98H10.29V103.30L13.20 106.10L10.29 108.90V107.22H8.50Z" fill="#2c62b4" />
<circle cx="20" cy="106.10" r="4.2" fill="#f8fbff" stroke="#3a68b4" stroke-width="1.4"/>
<path d="M14.6 104.80L16.4 106.10L14.6 107.40Z" fill="#3a68b4" />
<text x="20.00" y="108.31" font-size="6.80" fill="#2a2a30" stroke="#2a2a30" stroke-width="0.088" font-weight="bold" text-anchor="middle">2</text>
<path d="M26.60 106.30C26.80 100.50 30.20 100.50 30.80 105.90" fill="none" stroke="#1fa032" stroke-width="1.5" />
<path d="M30.80 105.90C31.20 111.30 34.40 111.30 34.80 105.50" fill="none" stroke="#8e96a4" stroke-width="0.9" />
<line x1="26.00" y1="109.90" x2="35.20" y2="101.50" stroke="#30343c" stroke-width="0.8" />
<text x="40.00" y="109.11" font-size="9.70" fill="#1a4ca8" stroke="#1a4ca8" stroke-width="0.126" font-weight="normal" textLength="5.60" lengthAdjust="spacingAndGlyphs" >...</text>
<text x="48.00" y="109.11" font-size="9.70" fill="#141a28" stroke="#141a28" stroke-width="0.126" font-weight="normal" textLength="24.40" lengthAdjust="spacingAndGlyphs" >-50 mV</text>
<path d="M85.8 105.70H89.4M85.6 107.50H89.2M88.6 103.50L86.4 109.10" fill="none" stroke="#b4bdcc" stroke-width="0.8" />
<line x1="90.90" y1="103.10" x2="90.90" y2="109.10" stroke="#b4bdcc" stroke-width="0.9" />
<path d="M93.20 103.20L96.70 106.10L93.20 109.00Z" fill="#b4bdcc" />
<rect x="1.70" y="112.74" width="80.30" height="13.27" fill="url(#gRow)" stroke="#b4c0d6" stroke-width="0.6" />
<text x="3.60" y="122.43" font-size="9.20" fill="#000" stroke="#000" stroke-width="0.180" font-weight="normal" textLength="4.50" lengthAdjust="spacingAndGlyphs" >3</text>
<path d="M8.50 118.25H10.29V116.58L13.20 119.38L10.29 122.17V120.50H8.50Z" fill="#2c62b4" />
<circle cx="20" cy="119.38" r="4.2" fill="#f8fbff" stroke="#3a68b4" stroke-width="1.4"/>
<path d="M14.6 118.08L16.4 119.38L14.6 120.67Z" fill="#3a68b4" />
<text x="20.00" y="121.58" font-size="6.80" fill="#2a2a30" stroke="#2a2a30" stroke-width="0.088" font-weight="bold" text-anchor="middle">3</text>
<path d="M26.60 119.58C26.80 113.78 30.20 113.78 30.80 119.17" fill="none" stroke="#1fa032" stroke-width="1.5" />
<path d="M30.80 119.17C31.20 124.58 34.40 124.58 34.80 118.78" fill="none" stroke="#8e96a4" stroke-width="0.9" />
<line x1="26.00" y1="123.17" x2="35.20" y2="114.78" stroke="#30343c" stroke-width="0.8" />
<text x="40.00" y="122.38" font-size="9.70" fill="#1a4ca8" stroke="#1a4ca8" stroke-width="0.126" font-weight="normal" textLength="5.60" lengthAdjust="spacingAndGlyphs" >...</text>
<text x="48.00" y="122.38" font-size="9.70" fill="#141a28" stroke="#141a28" stroke-width="0.126" font-weight="normal" textLength="24.40" lengthAdjust="spacingAndGlyphs" >-50 mV</text>
<path d="M85.8 118.97H89.4M85.6 120.78H89.2M88.6 116.78L86.4 122.38" fill="none" stroke="#b4bdcc" stroke-width="0.8" />
<line x1="90.90" y1="116.38" x2="90.90" y2="122.38" stroke="#b4bdcc" stroke-width="0.9" />
<path d="M93.20 116.47L96.70 119.38L93.20 122.28Z" fill="#b4bdcc" />
<rect x="1.70" y="126.01" width="80.30" height="13.27" fill="url(#gRow)" stroke="#b4c0d6" stroke-width="0.6" />
<text x="3.60" y="135.70" font-size="9.20" fill="#000" stroke="#000" stroke-width="0.180" font-weight="normal" textLength="4.50" lengthAdjust="spacingAndGlyphs" >4</text>
<path d="M8.50 131.53H10.29V129.84L13.20 132.65L10.29 135.45V133.77H8.50Z" fill="#2c62b4" />
<circle cx="20" cy="132.65" r="4.2" fill="#f8fbff" stroke="#3a68b4" stroke-width="1.4"/>
<path d="M14.6 131.34L16.4 132.65L14.6 133.95Z" fill="#3a68b4" />
<text x="20.00" y="134.85" font-size="6.80" fill="#2a2a30" stroke="#2a2a30" stroke-width="0.088" font-weight="bold" text-anchor="middle">4</text>
<path d="M26.60 132.84C26.80 127.05 30.20 127.05 30.80 132.45" fill="none" stroke="#1fa032" stroke-width="1.5" />
<path d="M30.80 132.45C31.20 137.84 34.40 137.84 34.80 132.05" fill="none" stroke="#8e96a4" stroke-width="0.9" />
<line x1="26.00" y1="136.45" x2="35.20" y2="128.05" stroke="#30343c" stroke-width="0.8" />
<text x="40.00" y="135.65" font-size="9.70" fill="#1a4ca8" stroke="#1a4ca8" stroke-width="0.126" font-weight="normal" textLength="5.60" lengthAdjust="spacingAndGlyphs" >...</text>
<text x="48.00" y="135.65" font-size="9.70" fill="#141a28" stroke="#141a28" stroke-width="0.126" font-weight="normal" textLength="11.60" lengthAdjust="spacingAndGlyphs" >1 V</text>
<path d="M85.8 132.25H89.4M85.6 134.05H89.2M88.6 130.05L86.4 135.65" fill="none" stroke="#b4bdcc" stroke-width="0.8" />
<line x1="90.90" y1="129.65" x2="90.90" y2="135.65" stroke="#b4bdcc" stroke-width="0.9" />
<path d="M93.20 129.75L96.70 132.65L93.20 135.55Z" fill="#b4bdcc" />
<line x1="1.00" y1="140.60" x2="100.00" y2="140.60" stroke="#b9c5d9" stroke-width="0.6" />
<line x1="1.00" y1="141.20" x2="100.00" y2="141.20" stroke="#f4f7fc" stroke-width="0.6" />
<path d="M5.2 149.2C5 142.6 8.4 142.6 8.8 147.4C9.2 142.6 12.6 142.6 12.4 149.2" fill="none" stroke="#2c2c2c" stroke-width="1.1" />
<path d="M6.8 148.8C6.8 145.4 8.4 145.4 8.8 147.4C9.2 145.4 10.8 145.4 10.8 148.8" fill="none" stroke="#2c2c2c" stroke-width="0.7" />
<path d="M4.6 152.2Q6.2 153 7.2 151Q8.8 148.4 10.2 151Q11.4 153 13 152.2" fill="none" stroke="#28a038" stroke-width="0.8" />
<text x="14.80" y="151.05" font-size="9.20" fill="#000" stroke="#000" stroke-width="0.180" font-weight="normal" textLength="4.40" lengthAdjust="spacingAndGlyphs" >1</text>
<path d="M19.90 146.88H21.69V145.20L24.60 148.00L21.69 150.80V149.12H19.90Z" fill="#2c62b4" />
<path d="M27.6 151.2H30.3V144.7H34" fill="none" stroke="#28a038" stroke-width="0.9" />
<path d="M28.2 149.2L30.5 146.4L32.8 149.2Z" fill="#101010" />
<path d="M41 152.4C43.4 150 42.4 145 44.6 143.4" fill="none" stroke="#30a040" stroke-width="0.9" />
<path d="M38 149.5H40.8M39.4 148.1V150.9" fill="none" stroke="#101010" stroke-width="0.8" />
<text x="45.80" y="151.01" font-size="9.70" fill="#141a28" stroke="#141a28" stroke-width="0.126" font-weight="normal" textLength="13.00" lengthAdjust="spacingAndGlyphs" >:0 V</text>
<path d="M90.00 144.80L93.40 147.60L90.00 150.40Z" fill="#b4bdcc" />
<path d="M5.6 161.79999999999998C6 155.4 8.8 155.4 9.2 160.0C9.6 164.2 12.2 164.2 12.8 159.2" fill="none" stroke="#28a038" stroke-width="0.9" />
<path d="M4.4 165.4H12.8" fill="none" stroke="#181818" stroke-width="0.7" stroke-dasharray="1 0.7"/>
<path d="M3.4 165.4L5 164.29999999999998V166.5ZM13.8 165.4L12.2 164.29999999999998V166.5Z" fill="#181818" />
<path d="M4 163.0V163.79999999999998M13.2 163.0V163.79999999999998" fill="none" stroke="#181818" stroke-width="0.6" />
<text x="14.60" y="164.61" font-size="9.70" fill="#141a28" stroke="#141a28" stroke-width="0.126" font-weight="normal" textLength="62.40" lengthAdjust="spacingAndGlyphs" >0000:05:26.988.80</text>
<path d="M88.90 158.30L85.40 161.20L88.90 164.10Z" fill="#b4bdcc" />
<line x1="90.90" y1="158.20" x2="90.90" y2="164.20" stroke="#b4bdcc" stroke-width="0.9" />
<path d="M93.20 158.30L96.70 161.20L93.20 164.10Z" fill="#b4bdcc" />
<line x1="1.00" y1="168.20" x2="100.00" y2="168.20" stroke="#b9c5d9" stroke-width="0.6" />
<line x1="1.00" y1="168.80" x2="100.00" y2="168.80" stroke="#f4f7fc" stroke-width="0.6" />
<text x="5.00" y="180.10" font-size="10.80" fill="#000" stroke="#000" stroke-width="0.350" font-weight="normal" textLength="7.20" lengthAdjust="spacingAndGlyphs" >A</text>
<text x="12.60" y="180.21" font-size="9.70" fill="#141a28" stroke="#141a28" stroke-width="0.126" font-weight="normal" textLength="64.40" lengthAdjust="spacingAndGlyphs" >:0000:05:26.997.00</text>
<path d="M88.90 174.10L85.40 177.00L88.90 179.90Z" fill="#b4bdcc" />
<line x1="90.90" y1="174.00" x2="90.90" y2="180.00" stroke="#b4bdcc" stroke-width="0.9" />
<path d="M93.20 174.10L96.70 177.00L93.20 179.90Z" fill="#b4bdcc" />
<text x="5.60" y="193.10" font-size="10.80" fill="#000" stroke="#000" stroke-width="0.350" font-weight="normal" textLength="6.40" lengthAdjust="spacingAndGlyphs" >B</text>
<text x="12.60" y="193.21" font-size="9.70" fill="#141a28" stroke="#141a28" stroke-width="0.126" font-weight="normal" textLength="64.40" lengthAdjust="spacingAndGlyphs" >:0000:05:27.013.68</text>
<path d="M88.90 187.10L85.40 190.00L88.90 192.90Z" fill="#b4bdcc" />
<line x1="90.90" y1="187.00" x2="90.90" y2="193.00" stroke="#b4bdcc" stroke-width="0.9" />
<path d="M93.20 187.10L96.70 190.00L93.20 192.90Z" fill="#b4bdcc" />
<text x="4.80" y="205.20" font-size="11.20" fill="#000" stroke="#000" stroke-width="0.300" font-weight="normal" textLength="6.20" lengthAdjust="spacingAndGlyphs" >φ</text>
<text x="11.60" y="206.21" font-size="9.70" fill="#5a6a84" stroke="#5a6a84" stroke-width="0.126" font-weight="normal" textLength="6.80" lengthAdjust="spacingAndGlyphs" >:...</text>
<path d="M90.00 199.60L93.40 202.40L90.00 205.20Z" fill="#b4bdcc" />
<path d="M1.7 223.40V214.80Q1.7 213.40 3.1 213.40H97.9Q99.3 213.40 99.3 214.80V223.40Z" fill="url(#gHdr)" stroke="#9096a6" stroke-width="0.5" />
<text x="3.90" y="221.24" font-size="8.20" fill="#000" stroke="#000" stroke-width="0.107" font-weight="normal" textLength="3.00" lengthAdjust="spacingAndGlyphs" >1</text>
<path d="M7.50 217.80H8.78V216.60L10.86 218.60L8.78 220.60V219.40H7.50Z" fill="#2c62b4" />
<text x="11.00" y="221.24" font-size="8.20" fill="#20243a" stroke="#20243a" stroke-width="0.107" font-weight="normal" textLength="9.40" lengthAdjust="spacingAndGlyphs" >in1</text>
<rect x="1.70" y="223.40" width="97.60" height="32.00" fill="#f0fce9" stroke="#c2ccc0" stroke-width="0.5" />
<text x="2.40" y="238.60" font-size="15.60" fill="#1c1c1c" stroke="#1c1c1c" stroke-width="0.203" font-weight="normal" textLength="69.20" lengthAdjust="spacingAndGlyphs" >A:3.006 V</text>
<text x="2.40" y="254.15" font-size="15.60" fill="#1c1c1c" stroke="#1c1c1c" stroke-width="0.203" font-weight="normal" textLength="81.60" lengthAdjust="spacingAndGlyphs" >Δ:1.832 mV</text>
<path d="M1.7 266.70V258.10Q1.7 256.70 3.1 256.70H97.9Q99.3 256.70 99.3 258.10V266.70Z" fill="url(#gHdr)" stroke="#9096a6" stroke-width="0.5" />
<text x="3.90" y="264.54" font-size="8.20" fill="#000" stroke="#000" stroke-width="0.107" font-weight="normal" textLength="3.00" lengthAdjust="spacingAndGlyphs" >3</text>
<path d="M7.50 261.10H8.78V259.90L10.86 261.90L8.78 263.90V262.70H7.50Z" fill="#2c62b4" />
<text x="11.00" y="264.54" font-size="8.20" fill="#20243a" stroke="#20243a" stroke-width="0.107" font-weight="normal" textLength="9.40" lengthAdjust="spacingAndGlyphs" >in3</text>
<rect x="1.70" y="266.70" width="97.60" height="32.00" fill="#f0fce9" stroke="#c2ccc0" stroke-width="0.5" />
<text x="2.40" y="281.90" font-size="15.60" fill="#1c1c1c" stroke="#1c1c1c" stroke-width="0.203" font-weight="normal" textLength="78.60" lengthAdjust="spacingAndGlyphs" >A:-69.6 mV</text>
<text x="2.40" y="297.45" font-size="15.60" fill="#1c1c1c" stroke="#1c1c1c" stroke-width="0.203" font-weight="normal" textLength="38.60" lengthAdjust="spacingAndGlyphs" >Δ:0 V</text>
<path d="M1.7 310.00V301.40Q1.7 300.00 3.1 300.00H97.9Q99.3 300.00 99.3 301.40V310.00Z" fill="url(#gHdr)" stroke="#9096a6" stroke-width="0.5" />
<text x="3.90" y="307.84" font-size="8.20" fill="#000" stroke="#000" stroke-width="0.107" font-weight="normal" textLength="3.00" lengthAdjust="spacingAndGlyphs" >4</text>
<path d="M7.50 304.40H8.78V303.20L10.86 305.20L8.78 307.20V306.00H7.50Z" fill="#2c62b4" />
<text x="11.00" y="307.84" font-size="8.20" fill="#20243a" stroke="#20243a" stroke-width="0.107" font-weight="normal" textLength="9.40" lengthAdjust="spacingAndGlyphs" >in4</text>
<rect x="1.70" y="310.00" width="97.60" height="32.00" fill="#f0fce9" stroke="#c2ccc0" stroke-width="0.5" />
<text x="2.40" y="325.20" font-size="15.60" fill="#1c1c1c" stroke="#1c1c1c" stroke-width="0.203" font-weight="normal" textLength="82.60" lengthAdjust="spacingAndGlyphs" >A:25.64 mV</text>
<text x="2.40" y="340.75" font-size="15.60" fill="#1c1c1c" stroke="#1c1c1c" stroke-width="0.203" font-weight="normal" textLength="38.60" lengthAdjust="spacingAndGlyphs" >Δ:0 V</text>
<path d="M1.7 353.30V344.70Q1.7 343.30 3.1 343.30H97.9Q99.3 343.30 99.3 344.70V353.30Z" fill="url(#gHdr)" stroke="#9096a6" stroke-width="0.5" />
<text x="2.60" y="351.14" font-size="8.20" fill="#20243a" stroke="#20243a" stroke-width="0.107" font-weight="normal" textLength="46.40" lengthAdjust="spacingAndGlyphs" >A-B интервал</text>
<rect x="1.70" y="353.30" width="97.60" height="32.00" fill="#f0fce9" stroke="#c2ccc0" stroke-width="0.5" />
<text x="4.20" y="368.50" font-size="15.60" fill="#1c1c1c" stroke="#1c1c1c" stroke-width="0.203" font-weight="normal" textLength="77.60" lengthAdjust="spacingAndGlyphs" >T:16.68 ms</text>
<text x="2.80" y="384.05" font-size="15.60" fill="#1c1c1c" stroke="#1c1c1c" stroke-width="0.203" font-weight="normal" textLength="77.00" lengthAdjust="spacingAndGlyphs" >F:59.95 Hz</text>
</g>
</svg>
</body></html>
